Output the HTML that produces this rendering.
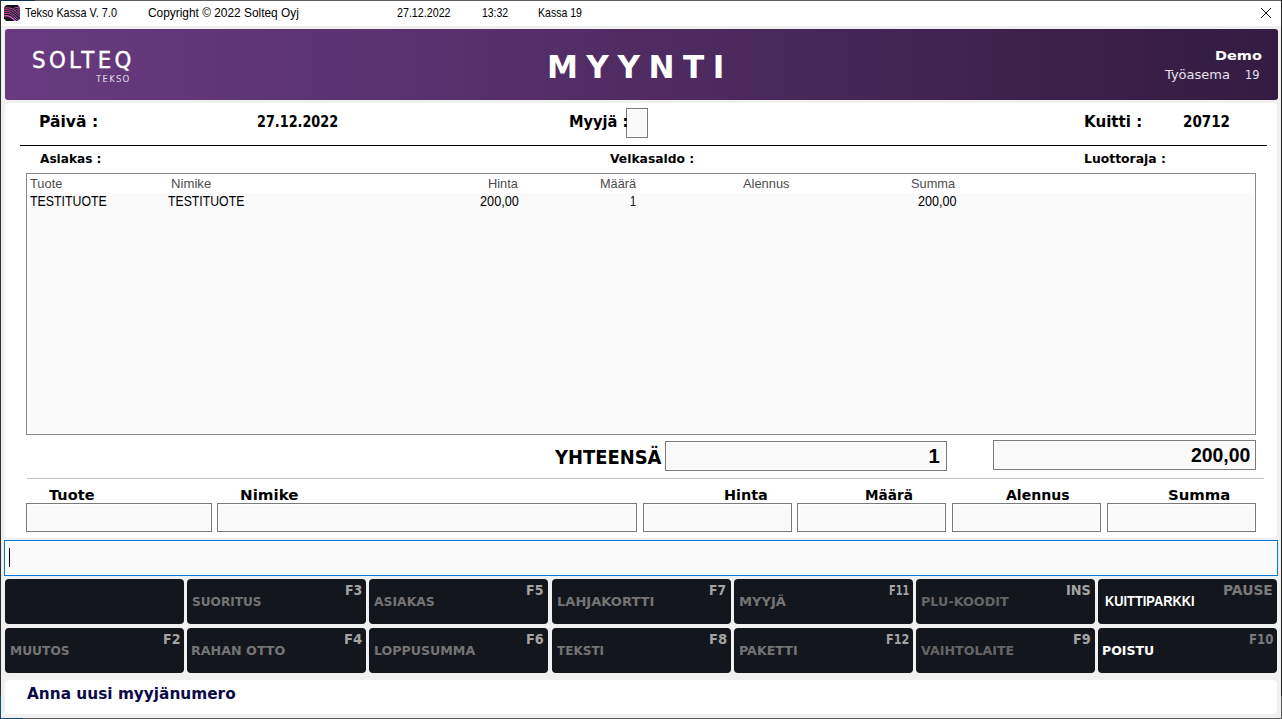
<!DOCTYPE html>
<html lang="fi">
<head>
<meta charset="utf-8">
<title>Tekso Kassa V. 7.0</title>
<style>
*{box-sizing:border-box}
html,body{margin:0;padding:0}
body{width:1282px;height:719px;overflow:hidden;background:#f0f0f0;position:relative;font-family:"Liberation Sans",sans-serif}
.a{position:absolute}
.t{position:absolute;white-space:pre;line-height:normal;transform-origin:0 50%}
.box{position:absolute;border:1px solid #7a7a7a;background:#fafafa;box-shadow:inset 0 0 0 1px #fff}
.btn{position:absolute;background:#14161d;border-radius:4px;width:179px;height:44.7px}
</style>
</head>
<body>
<!-- window frame -->
<div class="a" style="left:0;top:0;width:1282px;height:1px;background:#5e5e5e"></div>
<div class="a" style="left:0;top:0;width:35px;height:1px;background:#0b3050"></div>
<div class="a" style="left:1px;top:1px;width:1280px;height:25px;background:#fff"></div>
<div class="a" style="left:0;top:0;width:1px;height:719px;background:#2b2b2b"></div>
<div class="a" style="left:0;top:696px;width:1px;height:23px;background:#0d4f6a"></div>
<div class="a" style="left:1281px;top:0;width:1px;height:696px;background:#222"></div>
<div class="a" style="left:1281px;top:696px;width:1px;height:23px;background:#5a5a5a"></div>
<div class="a" style="left:0;top:718px;width:1282px;height:1px;background:#5a5a5a"></div>
<div class="a" style="left:0;top:718px;width:23px;height:1px;background:#0d4f6a"></div>
<!-- app icon -->
<svg class="a" style="left:4px;top:5px" width="16" height="16" viewBox="0 0 16 16">
<defs><clipPath id="ic"><path d="M2.300 0h11.400L16 2.300v11.400L13.700 16H2.300L0 13.700V2.300z"/></clipPath>
<linearGradient id="ig" x1="0" x2="1"><stop offset="0" stop-color="#ec4a9e"/><stop offset=".5" stop-color="#df58c8"/><stop offset="1" stop-color="#d066f2"/></linearGradient></defs>
<g clip-path="url(#ic)"><rect width="16" height="16" fill="#14181e"/>
<g fill="none" stroke="url(#ig)" stroke-width=".85">
<path d="M-1 2.900H4.500C8 2.900 10 5 17 11"/>
<path d="M-1 4.800H4.200C7.500 4.800 9.500 7 17 13.200"/>
<path d="M-1 6.700H4C7 6.700 9 9 16.500 15.700"/>
<path d="M-1 8.500H3.800C6.500 8.500 8.500 10.500 14.500 16.500"/>
<path d="M-1 10.700H3C5.500 10.700 8 12.300 12.300 16.600" stroke-width="1.500"/>
<path d="M17 2.300H13.500C12 2.300 11 2.800 9.300 3.700"/>
<path d="M17 4.100H14C13 4.100 12.200 4.600 11.100 5.200"/>
<path d="M17 5.900H14.700C13.900 5.900 13.300 6.300 12.700 6.700"/>
<path d="M17 7.700H15.400L14.400 8.200"/>
</g></g></svg>
<!-- close button -->
<svg class="a" style="left:1260px;top:7px" width="12" height="12" viewBox="0 0 12 12"><path d="M1 1l10 10M11 1L1 11" stroke="#000" stroke-width=".95" fill="none"/></svg>

<!-- banner -->
<div class="a" style="left:5px;top:29px;width:1272.600px;height:70.500px;border-radius:3px;background:linear-gradient(90deg,#693a7f 0%,#5a3270 30%,#4d2a5f 55%,#3e224e 78%,#341c43 100%)"></div>

<!-- main white panel -->
<div class="a" style="left:5px;top:103px;width:1272.300px;height:435px;border-radius:4px;background:#fff"></div>
<div class="a" style="left:20px;top:145px;width:1247px;height:1px;background:#000"></div>
<div class="box" style="left:626px;top:108px;width:22px;height:30px"></div>
<!-- list -->
<div class="a" style="left:26px;top:173px;width:1230px;height:262px;border:1px solid #828790;background:#fafafa;box-shadow:inset 0 0 0 1px #fff"></div>
<div class="a" style="left:27px;top:174px;width:1228px;height:18.500px;background:#fff"></div>
<!-- totals -->
<div class="box" style="left:665px;top:441px;width:282px;height:30px"></div>
<div class="box" style="left:993px;top:440px;width:263px;height:30px"></div>
<div class="a" style="left:27px;top:478px;width:1237px;height:1px;background:#c2c2c2"></div>
<!-- inputs -->
<div class="box" style="left:26px;top:503px;width:186px;height:29px"></div>
<div class="box" style="left:217px;top:503px;width:420px;height:29px"></div>
<div class="box" style="left:643px;top:503px;width:149px;height:29px"></div>
<div class="box" style="left:797px;top:503px;width:149px;height:29px"></div>
<div class="box" style="left:952px;top:503px;width:149px;height:29px"></div>
<div class="box" style="left:1107px;top:503px;width:149px;height:29px"></div>
<!-- command line -->
<div class="a" style="left:4px;top:540px;width:1274px;height:36px;border:1px solid #0078d7;background:#fafafa;box-shadow:inset 0 0 0 1px #fff"></div>
<div class="a" style="left:9px;top:548px;width:1px;height:19px;background:#000"></div>
<!-- buttons -->
<div class="btn" style="left:5px;top:579px"></div>
<div class="btn" style="left:187px;top:579px"></div>
<div class="btn" style="left:369px;top:579px"></div>
<div class="btn" style="left:552px;top:579px"></div>
<div class="btn" style="left:734px;top:579px"></div>
<div class="btn" style="left:916px;top:579px"></div>
<div class="btn" style="left:1098px;top:579px"></div>
<div class="btn" style="left:5px;top:628.1px"></div>
<div class="btn" style="left:187px;top:628.1px"></div>
<div class="btn" style="left:369px;top:628.1px"></div>
<div class="btn" style="left:552px;top:628.1px"></div>
<div class="btn" style="left:734px;top:628.1px"></div>
<div class="btn" style="left:916px;top:628.1px"></div>
<div class="btn" style="left:1098px;top:628.1px"></div>
<!-- status -->
<div class="a" style="left:5px;top:680px;width:1272px;height:34.200px;border-radius:4px;background:#fff"></div>

<div class="t" style="left:25.2px;top:5px;font:normal 12.9px 'Liberation Sans',sans-serif;color:#000;transform:scaleX(0.8423)">Tekso Kassa V. 7.0</div>
<div class="t" style="left:147.5px;top:5px;font:normal 12.9px 'Liberation Sans',sans-serif;color:#000;transform:scaleX(0.9220)">Copyright © 2022 Solteq Oyj</div>
<div class="t" style="left:397.2px;top:5px;font:normal 12.9px 'Liberation Sans',sans-serif;color:#000;transform:scaleX(0.8299)">27.12.2022</div>
<div class="t" style="left:481.8px;top:5px;font:normal 12.9px 'Liberation Sans',sans-serif;color:#000;transform:scaleX(0.8102)">13:32</div>
<div class="t" style="left:537.88px;top:5px;font:normal 12.9px 'Liberation Sans',sans-serif;color:#000;transform:scaleX(0.8178)">Kassa 19</div>
<div class="t" style="left:31.57px;top:47.3px;font:normal 23px 'DejaVu Sans',sans-serif;color:#fff;letter-spacing:3.56px;transform:scaleX(0.9300);-webkit-text-stroke:.4px #fff">SOLTEQ</div>
<div class="t" style="left:95.8px;top:74px;font:200 9.05px 'DejaVu Sans',sans-serif;color:#fbf8fc;letter-spacing:1.26px;transform:scaleX(0.9500);-webkit-text-stroke:.22px #fbf8fc">TEKSO</div>
<div class="t" style="left:546.9px;top:48.8px;font:bold 31.1px 'DejaVu Sans',sans-serif;color:#fff;letter-spacing:8.52px">MYYNTI</div>
<div class="t" style="left:1214.8px;top:47.9px;font:bold 13.15px 'DejaVu Sans',sans-serif;color:#fff;transform:scaleX(1.1033)">Demo</div>
<div class="t" style="left:1164.95px;top:67.9px;font:normal 12.35px 'DejaVu Sans',sans-serif;color:#e9e2ee;transform:scaleX(1.0534)">Työasema</div>
<div class="t" style="left:1244.88px;top:67.9px;font:normal 12.35px 'DejaVu Sans',sans-serif;color:#e9e2ee;transform:scaleX(0.9240)">19</div>
<div class="t" style="left:39.25px;top:112px;font:bold 16.45px 'DejaVu Sans',sans-serif;color:#000;transform:scaleX(0.9472)">Päivä :</div>
<div class="t" style="left:256.92px;top:112px;font:bold 16.45px 'DejaVu Sans',sans-serif;color:#000;transform:scaleX(0.7801)">27.12.2022</div>
<div class="t" style="left:568.51px;top:112px;font:bold 16.45px 'DejaVu Sans',sans-serif;color:#000;transform:scaleX(0.8889)">Myyjä :</div>
<div class="t" style="left:1083.68px;top:112px;font:bold 16.45px 'DejaVu Sans',sans-serif;color:#000;transform:scaleX(0.9185)">Kuitti :</div>
<div class="t" style="left:1182.68px;top:112px;font:bold 16.45px 'DejaVu Sans',sans-serif;color:#000;transform:scaleX(0.8215)">20712</div>
<div class="t" style="left:40.2px;top:150.95px;font:bold 12.8px 'DejaVu Sans',sans-serif;color:#000;transform:scaleX(0.9473)">Asiakas :</div>
<div class="t" style="left:610.4px;top:150.95px;font:bold 12.8px 'DejaVu Sans',sans-serif;color:#000;transform:scaleX(0.9623)">Velkasaldo :</div>
<div class="t" style="left:1083.63px;top:150.95px;font:bold 12.8px 'DejaVu Sans',sans-serif;color:#000;transform:scaleX(0.9684)">Luottoraja :</div>
<div class="t" style="left:29.8px;top:175.6px;font:normal 13.6px 'Liberation Sans',sans-serif;color:#4d4d4d;transform:scaleX(0.9437)">Tuote</div>
<div class="t" style="left:171.03px;top:175.6px;font:normal 13.6px 'Liberation Sans',sans-serif;color:#4d4d4d;transform:scaleX(0.9680)">Nimike</div>
<div class="t" style="left:488.16px;top:175.6px;font:normal 13.6px 'Liberation Sans',sans-serif;color:#4d4d4d;transform:scaleX(0.9399)">Hinta</div>
<div class="t" style="left:599.96px;top:175.6px;font:normal 13.6px 'Liberation Sans',sans-serif;color:#4d4d4d;transform:scaleX(0.9376)">Määrä</div>
<div class="t" style="left:742.7px;top:175.6px;font:normal 13.6px 'Liberation Sans',sans-serif;color:#4d4d4d;transform:scaleX(0.9467)">Alennus</div>
<div class="t" style="left:911.4px;top:175.6px;font:normal 13.6px 'Liberation Sans',sans-serif;color:#4d4d4d;transform:scaleX(0.9413)">Summa</div>
<div class="t" style="left:29.8px;top:192.9px;font:normal 13.9px 'Liberation Sans',sans-serif;color:#000;transform:scaleX(0.8890)">TESTITUOTE</div>
<div class="t" style="left:168.2px;top:192.9px;font:normal 13.9px 'Liberation Sans',sans-serif;color:#000;transform:scaleX(0.8832)">TESTITUOTE</div>
<div class="t" style="left:479.7px;top:192.9px;font:normal 13.9px 'Liberation Sans',sans-serif;color:#000;transform:scaleX(0.9167)">200,00</div>
<div class="t" style="left:630.11px;top:192.9px;font:normal 13.9px 'Liberation Sans',sans-serif;color:#000;transform:scaleX(0.7857)">1</div>
<div class="t" style="left:917.9px;top:192.9px;font:normal 13.9px 'Liberation Sans',sans-serif;color:#000;transform:scaleX(0.9074)">200,00</div>
<div class="t" style="left:554.63px;top:445.6px;font:bold 19.2px 'DejaVu Sans',sans-serif;color:#000;transform:scaleX(0.9337)">YHTEENSÄ</div>
<div class="t" style="left:928.5px;top:445px;font:bold 20.3px 'Liberation Sans',sans-serif;color:#000">1</div>
<div class="t" style="left:1191.2px;top:443.9px;font:bold 20.15px 'Liberation Sans',sans-serif;color:#000;transform:scaleX(0.9625)">200,00</div>
<div class="t" style="left:49.2px;top:486.7px;font:bold 13.85px 'DejaVu Sans',sans-serif;color:#000;transform:scaleX(1.0511)">Tuote</div>
<div class="t" style="left:240.31px;top:486.7px;font:bold 13.85px 'DejaVu Sans',sans-serif;color:#000;transform:scaleX(1.0910)">Nimike</div>
<div class="t" style="left:723.56px;top:486.7px;font:bold 13.85px 'DejaVu Sans',sans-serif;color:#000;transform:scaleX(1.0391)">Hinta</div>
<div class="t" style="left:865.32px;top:486.7px;font:bold 13.85px 'DejaVu Sans',sans-serif;color:#000;transform:scaleX(0.9834)">Määrä</div>
<div class="t" style="left:1005.9px;top:486.7px;font:bold 13.85px 'DejaVu Sans',sans-serif;color:#000;transform:scaleX(1.0142)">Alennus</div>
<div class="t" style="left:1167.83px;top:486.7px;font:bold 13.85px 'DejaVu Sans',sans-serif;color:#000;transform:scaleX(1.0745)">Summa</div>
<div class="t" style="left:191.7px;top:594.4px;font:bold 12.6px 'DejaVu Sans',sans-serif;color:#747474;transform:scaleX(0.9626)">SUORITUS</div>
<div class="t" style="left:373.8px;top:594.4px;font:bold 12.6px 'DejaVu Sans',sans-serif;color:#747474;transform:scaleX(0.9813)">ASIAKAS</div>
<div class="t" style="left:556.86px;top:594.4px;font:bold 12.6px 'DejaVu Sans',sans-serif;color:#747474;transform:scaleX(1.0364)">LAHJAKORTTI</div>
<div class="t" style="left:738.56px;top:594.4px;font:bold 12.6px 'DejaVu Sans',sans-serif;color:#747474;transform:scaleX(1.0392)">MYYJÄ</div>
<div class="t" style="left:920.79px;top:594.4px;font:bold 12.6px 'DejaVu Sans',sans-serif;color:#656565;transform:scaleX(1.0128)">PLU-KOODIT</div>
<div class="t" style="left:9.53px;top:643.2px;font:bold 12.6px 'DejaVu Sans',sans-serif;color:#747474;transform:scaleX(0.9721)">MUUTOS</div>
<div class="t" style="left:191.49px;top:643.2px;font:bold 12.6px 'DejaVu Sans',sans-serif;color:#747474;transform:scaleX(1.0083)">RAHAN OTTO</div>
<div class="t" style="left:373.7px;top:643.2px;font:bold 12.6px 'DejaVu Sans',sans-serif;color:#747474;transform:scaleX(1.0007)">LOPPUSUMMA</div>
<div class="t" style="left:557.4px;top:643.2px;font:bold 12.6px 'DejaVu Sans',sans-serif;color:#747474;transform:scaleX(0.9545)">TEKSTI</div>
<div class="t" style="left:738.6px;top:643.2px;font:bold 12.6px 'DejaVu Sans',sans-serif;color:#747474;transform:scaleX(1.0044)">PAKETTI</div>
<div class="t" style="left:921px;top:643.2px;font:bold 12.6px 'DejaVu Sans',sans-serif;color:#656565;transform:scaleX(1.0043)">VAIHTOLAITE</div>
<div class="t" style="left:1102.11px;top:643.2px;font:bold 12.6px 'DejaVu Sans',sans-serif;color:#fff;transform:scaleX(0.9945)">POISTU</div>
<div class="t" style="left:1105.1px;top:593.2px;font:bold 14.45px 'Liberation Sans',sans-serif;color:#fff;transform:scaleX(0.8881)">KUITTIPARKKI</div>
<div class="t" style="left:344.56px;top:583.3px;font:bold 13.4px 'DejaVu Sans',sans-serif;color:#a4a4a4;transform:scaleX(0.9389)">F3</div>
<div class="t" style="left:526.46px;top:583.3px;font:bold 13.4px 'DejaVu Sans',sans-serif;color:#a4a4a4;transform:scaleX(0.9448)">F5</div>
<div class="t" style="left:709.28px;top:583.3px;font:bold 13.4px 'DejaVu Sans',sans-serif;color:#a4a4a4;transform:scaleX(0.9156)">F7</div>
<div class="t" style="left:888.57px;top:583.3px;font:bold 13.4px 'DejaVu Sans',sans-serif;color:#a4a4a4;transform:scaleX(0.7293)">F11</div>
<div class="t" style="left:1066.04px;top:583.3px;font:bold 13.4px 'DejaVu Sans',sans-serif;color:#a4a4a4;transform:scaleX(0.9632)">INS</div>
<div class="t" style="left:1222.97px;top:583.3px;font:bold 13.4px 'DejaVu Sans',sans-serif;color:#7a7a7a;transform:scaleX(1.0329)">PAUSE</div>
<div class="t" style="left:162.56px;top:632.1px;font:bold 13.4px 'DejaVu Sans',sans-serif;color:#a4a4a4;transform:scaleX(0.9448)">F2</div>
<div class="t" style="left:343.81px;top:632.1px;font:bold 13.4px 'DejaVu Sans',sans-serif;color:#a4a4a4;transform:scaleX(0.9914)">F4</div>
<div class="t" style="left:526.03px;top:632.1px;font:bold 13.4px 'DejaVu Sans',sans-serif;color:#a4a4a4;transform:scaleX(0.9681)">F6</div>
<div class="t" style="left:708.71px;top:632.1px;font:bold 13.4px 'DejaVu Sans',sans-serif;color:#a4a4a4;transform:scaleX(0.9856)">F8</div>
<div class="t" style="left:885.96px;top:632.1px;font:bold 13.4px 'DejaVu Sans',sans-serif;color:#a4a4a4;transform:scaleX(0.8389)">F12</div>
<div class="t" style="left:1072.84px;top:632.1px;font:bold 13.4px 'DejaVu Sans',sans-serif;color:#a4a4a4;transform:scaleX(0.9623)">F9</div>
<div class="t" style="left:1248.52px;top:632.1px;font:bold 13.4px 'DejaVu Sans',sans-serif;color:#7a7a7a;transform:scaleX(0.8766)">F10</div>
<div class="t" style="left:26.9px;top:683.7px;font:bold 16.15px 'DejaVu Sans',sans-serif;color:#0c0a46;transform:scaleX(0.9494)">Anna uusi myyjänumero</div>
</body>
</html>
